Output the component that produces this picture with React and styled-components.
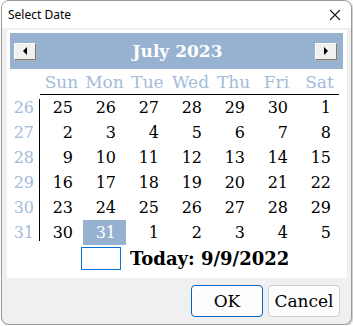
import React from "react";
import styled, { createGlobalStyle } from "styled-components";

const GlobalStyle = createGlobalStyle`
  html, body {
    margin: 0;
    padding: 0;
    background: #ffffff;
  }
  * {
    box-sizing: border-box;
  }
`;

const SERIF = `"DejaVu Serif", "Liberation Serif", serif`;
const BLUE = "#97b1d1";
const PALE = "#a5bbd9";

const weeks = [
  { no: 26, days: [25, 26, 27, 28, 29, 30, 1] },
  { no: 27, days: [2, 3, 4, 5, 6, 7, 8] },
  { no: 28, days: [9, 10, 11, 12, 13, 14, 15] },
  { no: 29, days: [16, 17, 18, 19, 20, 21, 22] },
  { no: 30, days: [23, 24, 25, 26, 27, 28, 29] },
  { no: 31, days: [30, 31, 1, 2, 3, 4, 5] },
];
const dayNames = ["Sun", "Mon", "Tue", "Wed", "Thu", "Fri", "Sat"];

const App = () => {
  return (
    <>
      <GlobalStyle />
      <Window>
        <TitleBar>
          <Title>Select Date</Title>
          <CloseIcon width="12" height="12" viewBox="0 0 12 12">
            <path d="M1 1 L11 11 M11 1 L1 11" stroke="#1a1a1a" strokeWidth="1.1" fill="none" />
          </CloseIcon>
        </TitleBar>
        <Body>
          <Panel>
            <MonthBar>
              <NavButton aria-label="previous">
                <svg width="5" height="8" viewBox="0 0 5 8">
                  <path d="M4 0 L0 4 L4 8 Z" fill="#000" />
                </svg>
              </NavButton>
              <MonthTitle>July 2023</MonthTitle>
              <NavButton aria-label="next">
                <svg width="5" height="8" viewBox="0 0 5 8">
                  <path d="M1 0 L5 4 L1 8 Z" fill="#000" />
                </svg>
              </NavButton>
            </MonthBar>
            <Grid>
              <Corner />
              <DayNames>
                {dayNames.map((d) => (
                  <DayName key={d}>{d}</DayName>
                ))}
              </DayNames>
              <WeekColumn>
                {weeks.map((w) => (
                  <WeekNo key={w.no}>{w.no}</WeekNo>
                ))}
              </WeekColumn>
              <Days>
                {weeks.map((w, wi) =>
                  w.days.map((d, di) => (
                    <Day key={`${wi}-${di}`} $selected={wi === 5 && di === 1}>
                      {d}
                    </Day>
                  ))
                )}
              </Days>
            </Grid>
            <TodayRow>
              <TodayBox />
              <TodayText>Today: 9/9/2022</TodayText>
            </TodayRow>
          </Panel>
          <Footer>
            <Button $primary>OK</Button>
            <Button>Cancel</Button>
          </Footer>
        </Body>
      </Window>
    </>
  );
};

const Window = styled.div`
  width: 351px;
  height: 325px;
  margin-left: 1px;
  border: 1px solid #9a9a9a;
  border-radius: 8px;
  overflow: hidden;
  display: flex;
  flex-direction: column;
  background: #f0f0f0;
  box-shadow: 1px 1px 2px rgba(0, 0, 0, 0.25);
`;

const TitleBar = styled.div`
  height: 27px;
  flex: none;
  display: flex;
  align-items: center;
  justify-content: space-between;
  padding: 0 10px 0 6px;
  background: #ffffff;
`;

const Title = styled.span`
  font-family: "Noto Sans", "Open Sans", sans-serif;
  font-size: 12px;
  color: #000;
`;

const CloseIcon = styled.svg`
  display: block;
  margin-top: 1px;
`;

const Body = styled.div`
  flex: 1;
  display: flex;
  flex-direction: column;
  padding: 2px 4px 0 5px;
`;

const Panel = styled.div`
  background: #ffffff;
  height: 248px;
  padding: 3px 4px 0 3px;
  display: flex;
  flex-direction: column;
`;

const MonthBar = styled.div`
  height: 36px;
  background: ${BLUE};
  display: flex;
  align-items: center;
  justify-content: space-between;
  padding: 0 6px 0 4px;
`;

const NavButton = styled.button`
  width: 22px;
  height: 17px;
  padding: 0;
  display: flex;
  align-items: center;
  justify-content: center;
  background: #f0f0f0;
  border: 1px solid;
  border-color: #ffffff #7a7a7a #7a7a7a #ffffff;
  box-shadow: 1px 1px 0 #b0b0b0;
`;

const MonthTitle = styled.span`
  font-family: ${SERIF};
  font-weight: bold;
  font-size: 17px;
  color: #ffffff;
  margin-left: 4px;
`;

const Grid = styled.div`
  display: grid;
  grid-template-columns: 30px 301px;
  grid-template-rows: 26px 150px;
`;

const Corner = styled.div``;

const DayNames = styled.div`
  display: grid;
  grid-template-columns: repeat(7, 43px);
  border-bottom: 1px solid #000;
  margin-right: 2px;
`;

const DayName = styled.div`
  font-family: ${SERIF};
  font-size: 17px;
  color: ${PALE};
  text-align: center;
  line-height: 26px;
`;

const WeekColumn = styled.div`
  display: flex;
  flex-direction: column;
  background: linear-gradient(#000, #000) right 0 center / 1px calc(100% - 8px) no-repeat;
`;

const WeekNo = styled.div`
  height: 25px;
  line-height: 25px;
  text-align: right;
  padding-right: 6px;
  font-family: ${SERIF};
  font-size: 16px;
  color: ${PALE};
`;

const Days = styled.div`
  display: grid;
  grid-template-columns: repeat(7, 43px);
  grid-auto-rows: 25px;
`;

const Day = styled.div`
  line-height: 25px;
  text-align: right;
  padding-right: 10px;
  font-family: ${SERIF};
  font-size: 16px;
  color: ${(p) => (p.$selected ? "#ffffff" : "#000000")};
  background: ${(p) => (p.$selected ? BLUE : "transparent")};
`;

const TodayRow = styled.div`
  display: flex;
  align-items: center;
  gap: 9px;
  margin-top: 2px;
  padding-left: 71px;
`;

const TodayBox = styled.div`
  width: 40px;
  height: 23px;
  border: 1px solid #0a74d4;
  background: #ffffff;
`;

const TodayText = styled.span`
  font-family: ${SERIF};
  font-weight: bold;
  font-size: 18px;
  color: #000;
`;

const Footer = styled.div`
  display: flex;
  justify-content: flex-end;
  gap: 5px;
  padding: 7px 7px 0 0;
`;

const Button = styled.button`
  width: 72px;
  height: 32px;
  border-radius: 4px;
  border: 1px solid ${(p) => (p.$primary ? "#0067c0" : "#d0d0d0")};
  background: #fdfdfd;
  font-family: ${SERIF};
  font-size: 17px;
  color: #000;
  padding: 0;
`;

export default App;
